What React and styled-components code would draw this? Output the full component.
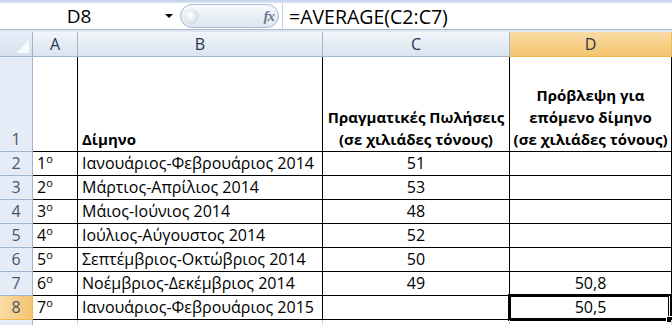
import React from "react";
import styled, { createGlobalStyle } from "styled-components";

const Global = createGlobalStyle`
  html, body { margin: 0; padding: 0; background: #ffffff; overflow: hidden; }
  body { font-family: "Open Sans", "Noto Sans", sans-serif; }
`;

const Page = styled.div`
  width: 672px;
  height: 325px;
  overflow: hidden;
  background: #dfe6ef;
`;

const TopStrip = styled.div`
  height: 3px;
  background: linear-gradient(#c4d5ea, #d5e1f0);
`;

const FormulaBar = styled.div`
  display: flex;
  align-items: stretch;
  height: 26px;
  background: #ffffff;
  border-bottom: 1px solid #a7b8cc;
`;

const NameBox = styled.div`
  width: 158px;
  display: flex;
  align-items: center;
  justify-content: center;
  font-size: 19px;
  color: #000;
`;

const DropArrow = styled.div`
  width: 22px;
  display: flex;
  align-items: center;
  justify-content: center;
  &::before {
    content: "";
    border-left: 4px solid transparent;
    border-right: 4px solid transparent;
    border-top: 4px solid #000;
  }
`;

const Pill = styled.div`
  width: 99px;
  margin: 1px 0;
  box-sizing: border-box;
  border: 1px solid #a9b9cf;
  border-radius: 12px;
  background: linear-gradient(#f7f9fc, #dde6f2);
  display: flex;
  align-items: center;
  justify-content: space-between;
  padding: 0 4px 0 3px;
`;

const Knob = styled.div`
  width: 15px;
  height: 15px;
  border-radius: 50%;
  background: radial-gradient(circle at 40% 40%, #ffffff 0%, #e3e8ef 50%, #b9c3d0 100%);
`;

const Fx = styled.span`
  font-family: "Liberation Serif", serif;
  font-style: italic;
  font-weight: bold;
  font-size: 15px;
  color: #6d7c90;
  letter-spacing: -1px;
`;

const FormulaInput = styled.div`
  flex: 1;
  margin-left: 3px;
  border-left: 1px solid #c6d2e0;
  padding-left: 6px;
  display: flex;
  align-items: center;
  font-size: 19.5px;
  color: #000;
`;

const Gap = styled.div`
  height: 2px;
  background: #dfe6ef;
`;

const Sheet = styled.div`
  display: grid;
  grid-template-columns: 33px 45px 245px 187px 162px;
  grid-template-rows: 25px 95px repeat(7, 24px) 24px;
  background: #ffffff;
`;

const ColHead = styled.div`
  box-sizing: border-box;
  display: flex;
  align-items: center;
  justify-content: center;
  font-size: 16px;
  color: #27364d;
  border-right: 1px solid ${(p) => (p.$sel ? "#f2b550" : "#9eb6ce")};
  border-bottom: 1px solid ${(p) => (p.$sel ? "#f2b550" : "#9eb6ce")};
  background: ${(p) =>
    p.$sel
      ? "linear-gradient(#f9dca5, #f6cf86 50%, #f3c470)"
      : "linear-gradient(#f2f6fb, #e5ecf5 50%, #dbe4f0)"};
`;

const Corner = styled(ColHead)`
  position: relative;
  background: linear-gradient(#e6edf7, #d7e2f0);
  &::after {
    content: "";
    position: absolute;
    right: 3px;
    bottom: 3px;
    border-left: 13px solid transparent;
    border-bottom: 13px solid #f6f9fd;
  }
`;

const RowHead = styled.div`
  box-sizing: border-box;
  display: flex;
  align-items: flex-end;
  justify-content: center;
  padding-bottom: 1px;
  font-size: 16px;
  color: #4a5569;
  border-right: 1px solid ${(p) => (p.$sel ? "#f2b550" : "#9eb6ce")};
  border-bottom: 1px solid ${(p) => (p.$sel ? "#f2b550" : "#9eb6ce")};
  background: ${(p) =>
    p.$sel ? "linear-gradient(90deg, #f9dca5, #f3c470)" : "#e4ecf7"};
`;

const Cell = styled.div`
  box-sizing: border-box;
  position: relative;
  display: flex;
  flex-direction: column;
  justify-content: flex-end;
  align-items: ${(p) => (p.$center ? "center" : "flex-start")};
  text-align: ${(p) => (p.$center ? "center" : "left")};
  padding: 0 4px 1px;
  font-size: ${(p) => (p.$bold ? "15px" : "16px")};
  line-height: 22px;
  font-weight: ${(p) => (p.$bold ? 700 : 400)};
  color: #000;
  white-space: nowrap;
  border-right: 1px solid ${(p) => (p.$open ? "#d0d7e5" : "#000")};
  border-bottom: 1px solid ${(p) => (p.$open ? "#d0d7e5" : "#000")};
`;

const Selection = styled.div`
  position: absolute;
  left: -2px;
  top: -2px;
  right: 0;
  bottom: -2px;
  border: 3px double #000;
  pointer-events: none;
  &::after {
    content: "";
    position: absolute;
    right: -5px;
    bottom: -5px;
    width: 5px;
    height: 5px;
    background: #000;
    border: 1px solid #fff;
  }
`;

const Ord = styled.span`
  & sup {
    font-size: 11px;
    vertical-align: 6px;
    line-height: 0;
  }
`;

const rows = [
  { n: 2, ord: 1, label: "Ιανουάριος-Φεβρουάριος 2014", c: "51", d: "" },
  { n: 3, ord: 2, label: "Μάρτιος-Απρίλιος 2014", c: "53", d: "" },
  { n: 4, ord: 3, label: "Μάιος-Ιούνιος 2014", c: "48", d: "" },
  { n: 5, ord: 4, label: "Ιούλιος-Αύγουστος 2014", c: "52", d: "" },
  { n: 6, ord: 5, label: "Σεπτέμβριος-Οκτώβριος 2014", c: "50", d: "" },
  { n: 7, ord: 6, label: "Νοέμβριος-Δεκέμβριος 2014", c: "49", d: "50,8" },
  { n: 8, ord: 7, label: "Ιανουάριος-Φεβρουάριος 2015", c: "", d: "50,5", sel: true },
];

export default function App() {
  return (
    <Page>
      <Global />
      <TopStrip />
      <FormulaBar>
        <NameBox>D8</NameBox>
        <DropArrow />
        <Pill>
          <Knob />
          <Fx>fx</Fx>
        </Pill>
        <FormulaInput>=AVERAGE(C2:C7)</FormulaInput>
      </FormulaBar>
      <Gap />
      <Sheet>
        <Corner />
        <ColHead>A</ColHead>
        <ColHead>B</ColHead>
        <ColHead>C</ColHead>
        <ColHead $sel>D</ColHead>

        <RowHead>1</RowHead>
        <Cell />
        <Cell $bold>Δίμηνο</Cell>
        <Cell $bold $center>
          <span>Πραγματικές Πωλήσεις</span>
          <span>(σε χιλιάδες τόνους)</span>
        </Cell>
        <Cell $bold $center>
          <span>Πρόβλεψη για</span>
          <span>επόμενο δίμηνο</span>
          <span>(σε χιλιάδες τόνους)</span>
        </Cell>

        {rows.map((r) => (
          <React.Fragment key={r.n}>
            <RowHead $sel={r.sel}>{r.n}</RowHead>
            <Cell>
              <Ord>
                {r.ord}
                <sup>o</sup>
              </Ord>
            </Cell>
            <Cell>{r.label}</Cell>
            <Cell $center>{r.c}</Cell>
            <Cell $center>
              {r.d}
              {r.sel && <Selection />}
            </Cell>
          </React.Fragment>
        ))}

        <RowHead />
        <Cell $open />
        <Cell $open />
        <Cell $open />
        <Cell $open />
      </Sheet>
    </Page>
  );
}
